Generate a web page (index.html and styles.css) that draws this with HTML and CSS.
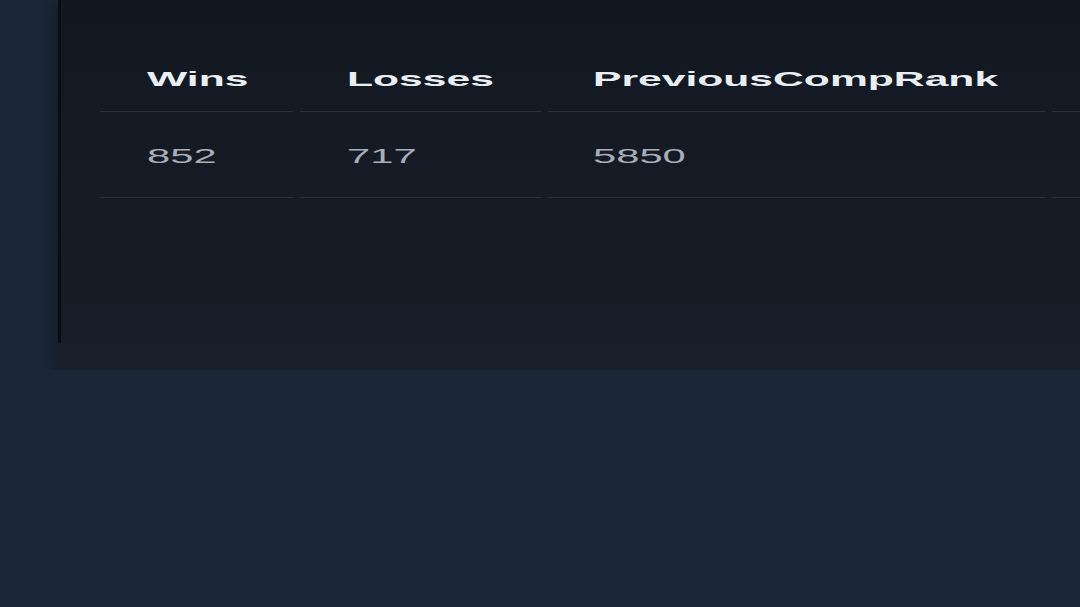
FILE: index.html
```html
<!DOCTYPE html>
<html>
    <head>
        <meta charset="UTF-8">
        <title>Player Stats</title>
        <link rel="stylesheet" href="styles.css">
    </head>
    <body>
        <div class="card">
            <div class="card-inner">
                <table class="stats">
                    <thead>
                        <tr>
                            <th class="col-wins"><span class="wide">Wins</span></th>
                            <th class="col-losses"><span class="wide">Losses</span></th>
                            <th class="col-rank"><span class="wide">PreviousCompRank</span></th>
                            <th class="col-rest"></th>
                        </tr>
                    </thead>
                    <tbody>
                        <tr>
                            <td><span class="wide">852</span></td>
                            <td><span class="wide">717</span></td>
                            <td class="col-rank"><span class="wide">5850</span></td>
                            <td></td>
                        </tr>
                    </tbody>
                </table>
            </div>
        </div>
    </body>
</html>
```

FILE: styles.css
```css
html {
    width: 100%;
    height: 100%;
}

body {
    margin: 0;
    padding-left: 58px;
    background: #1b2637;
    font-family: "Liberation Sans", Arial, sans-serif;
    overflow: hidden;
}

.card {
    background: linear-gradient(#121820, #181f2a);
    box-shadow: -4px 4px 10px rgba(0, 0, 0, 0.25);
    padding-bottom: 27px;
    width: 1300px;
}

.card-inner {
    border-left: 3px solid #0a0e14;
    height: 343px;
    padding-left: 32px;
    box-sizing: border-box;
}

.stats {
    border-collapse: separate;
    border-spacing: 7px 0;
    table-layout: fixed;
    width: 1150px;
}

.stats th,
.stats td {
    text-align: left;
    border-bottom: 1px solid #27313d;
    white-space: nowrap;
}

.stats th {
    font-weight: bold;
    font-size: 21px;
    line-height: 24px;
    color: #e9eef2;
    padding: 67px 0 20px 47px;
}

.stats td {
    font-size: 19.5px;
    line-height: 22px;
    color: #a7aeb8;
    padding: 33px 0 30px 47px;
}

.col-wins {
    width: 146px;
}

.col-losses {
    width: 194px;
}

.stats .col-rank {
    width: 452px;
    padding-left: 45px;
}

.col-rest {
    width: 150px;
}

.wide {
    display: inline-block;
    transform-origin: left center;
    transform: scaleX(2.03);
}

.stats td .wide {
    transform: scaleX(2.14);
}
```
